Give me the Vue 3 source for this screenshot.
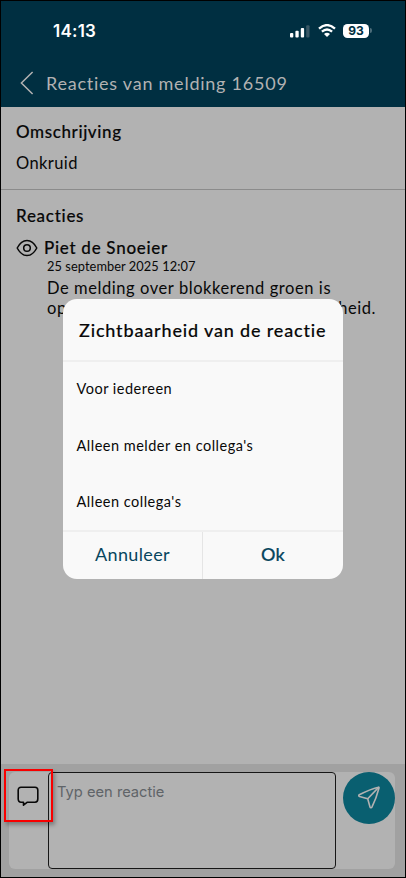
<script setup>
const options = ['Voor iedereen', "Alleen melder en collega's", "Alleen collega's"]
</script>

<template>
  <div class="phone">
    <header class="header">
      <div class="status">
        <span class="time">14:13</span>
        <div class="indicators">
          <svg class="signal" width="20" height="13" viewBox="0 0 20 13">
            <rect x="0" y="8" width="3.3" height="4.6" rx="1" fill="#fff" />
            <rect x="5.4" y="5.8" width="3.3" height="6.8" rx="1" fill="#fff" />
            <rect x="10.8" y="3" width="3.3" height="9.6" rx="1" fill="#fff" />
            <rect x="16.2" y="0.2" width="3.3" height="12.4" rx="1" fill="#395866" />
          </svg>
          <svg class="wifi" width="18" height="13" viewBox="0 0 18 13">
            <g fill="none" stroke="#fff" stroke-width="2.3">
              <path d="M1 4.6Q9 -2.4 17 4.6" />
              <path d="M3.9 7.7Q9 3.3 14.1 7.7" />
            </g>
            <path d="M6 10Q9 7.7 12 10L9 13Z" fill="#fff" />
          </svg>
          <div class="battery">93</div>
          <i class="nub"></i>
        </div>
      </div>
      <div class="titlebar">
        <svg class="back" width="14" height="24" viewBox="0 0 14 24">
          <path d="M12.6 1L1.4 12L12.6 23" fill="none" stroke="#b2b2b2" stroke-width="1.5" />
        </svg>
        <h1 class="title">Reacties van melding 16509</h1>
      </div>
    </header>

    <section class="description">
      <h2 class="heading omschrijving">Omschrijving</h2>
      <p class="body onkruid">Onkruid</p>
    </section>

    <section class="reactions">
      <h2 class="heading reacties">Reacties</h2>
      <div class="author">
        <svg width="22" height="18" viewBox="0 0 22 18" fill="none" stroke="#080808" stroke-width="1.5">
          <path d="M1.2 9C3.2 5.2 6.4 1.5 11 1.5S18.8 5.2 20.8 9C18.8 12.8 15.6 16.5 11 16.5S3.2 12.8 1.2 9Z" stroke-linejoin="round" />
          <circle cx="11" cy="9" r="3.3" />
        </svg>
        <h3 class="heading name">Piet de Snoeier</h3>
      </div>
      <p class="date">25 september 2025 12:07</p>
      <div class="message">
        <span class="line-one">De melding over blokkerend groen is</span>
        <div class="line-two"><span>opgelost</span><span>heid.</span></div>
      </div>
    </section>

    <footer class="footer">
      <div class="composer">
        <button class="visibility" aria-label="Zichtbaarheid">
          <svg width="22" height="21" viewBox="0 0 22 21">
            <path d="M4 1.2H18C19.7 1.2 20.8 2.3 20.8 4V13C20.8 15 19.7 16.2 18 16.2H10.4L6.5 19.2V16.2H4C2.3 16.2 1.2 15 1.2 13V4C1.2 2.3 2.3 1.2 4 1.2Z" fill="none" stroke="#080808" stroke-width="1.6" stroke-linejoin="round" />
          </svg>
        </button>
        <div class="input"><span>Typ een reactie</span></div>
        <button class="send" aria-label="Verstuur">
          <svg width="22" height="23" viewBox="0 0 22 23" fill="none" stroke="#b2b2b2" stroke-width="1.6" stroke-linejoin="round">
            <path d="M20.3 1.2C14 2.7 7.4 5.6 1.3 8.8C.5 9.3.6 10.2 1.5 10.5L9.7 12.8L12 21C12.3 22 13.4 22.1 13.9 21.2C17 15 19.4 8.2 21 2C21.1 1.4 20.9 1 20.3 1.2Z" />
            <path d="M9.7 12.8L20.6 1.4" />
          </svg>
        </button>
      </div>
    </footer>

    <div class="dialog" role="dialog">
      <h2 class="dialog-title"><span>Zichtbaarheid van de reactie</span></h2>
      <ul class="options">
        <li v-for="option in options" :key="option">{{ option }}</li>
      </ul>
      <div class="actions">
        <button class="cancel"><span>Annuleer</span></button>
        <button class="ok"><span>Ok</span></button>
      </div>
    </div>
  </div>
</template>

<style>
body { margin: 0; overflow: hidden; }
</style>

<style scoped>
* { box-sizing: border-box; }
h1, h2, h3, p, ul { margin: 0; padding: 0; font-weight: 400; }
ul { list-style: none; }
button { border: 0; padding: 0; background: none; font: inherit; }
svg { display: block; flex: none; }
.phone {
  position: relative;
  display: flex;
  flex-direction: column;
  width: 406px;
  height: 878px;
  border: 1px solid #000;
  background: #b2b2b2;
  color: #080808;
  font-family: Lato, sans-serif;
  white-space: nowrap;
  overflow: hidden;
}
.header { height: 106px; background: #002f41; flex: none; }
.status { display: flex; justify-content: space-between; height: 60px; padding: 0 33.5px 0 52px; }
.time {
  font: 600 17px/20px Inter, sans-serif;
  letter-spacing: .25px;
  color: #fff;
  padding-top: 20px;
}
.indicators { display: flex; height: 14px; margin-top: 23px; }
.signal { margin-top: 1px; }
.wifi { margin: 0 7px 0 8px; }
.battery {
  width: 26px;
  height: 14px;
  border-radius: 4.5px;
  background: #fff;
  color: #002f41;
  font: 700 12px/14px Inter, sans-serif;
  text-align: center;
}
.nub { width: 1.5px; height: 5px; margin: 4px 0 0 1px; border-radius: 0 2px 2px 0; background: #4c6d7a; }
.titlebar { display: flex; align-items: center; height: 24px; margin-top: 10px; padding-left: 18.5px; }
.title { margin-left: 12.5px; font-size: 18px; line-height: 24px; color: #b2b2b2; letter-spacing: .76px; }
.description { height: 83px; padding: 13px 15px 0; border-bottom: 1px solid #8b8b8b; flex: none; }
.heading { font-size: 17px; line-height: 24px; font-weight: 500; letter-spacing: .72px; -webkit-text-stroke: .15px #080808; }
.omschrijving { letter-spacing: .6px; }
.body { margin-top: 7px; font-size: 16.5px; line-height: 24px; letter-spacing: .4px; }
.reactions { padding: 14px 15px 0; flex: 1; }
.author { display: flex; align-items: center; height: 24px; margin-top: 8px; }
.name { margin-left: 6px; }
.date { margin: -2px 0 0 31px; font-size: 12.8px; line-height: 16px; letter-spacing: .07px; }
.message { margin: 4px 0 0 31px; font-size: 16.5px; line-height: 20px; letter-spacing: .57px; }
.line-one { display: block; }
.line-two { display: flex; justify-content: space-between; width: 329px; }
.footer { height: 113px; padding: 8px 10px 8px 8px; background: #a1a1a1; flex: none; }
.composer { display: flex; height: 97px; border-radius: 6px; background: #b2b2b2; }
.visibility {
  position: relative;
  z-index: 1;
  display: flex;
  align-items: flex-start;
  width: 49px;
  height: 53px;
  margin: -3px -10px 0 -5px;
  padding: 15px 0 0 11px;
  border: 2px solid #f80000;
  box-shadow: 2px 3px 4px rgba(0, 0, 0, .3);
  flex: none;
}
.input {
  width: 288px;
  height: 97px;
  margin-left: 5px;
  padding: 8px;
  border: 1px solid #161616;
  border-radius: 4px;
  color: #606468;
  font: 14.7px/22px Inter, sans-serif;
  flex: none;
}
.send {
  display: flex;
  justify-content: center;
  width: 52px;
  height: 52px;
  margin-left: auto;
  padding-top: 14px;
  border-radius: 50%;
  background: #095f70;
  flex: none;
}
.dialog {
  position: absolute;
  left: 62px;
  top: 298px;
  width: 280px;
  height: 280px;
  border-radius: 14px;
  background: #f9f9f9;
  overflow: hidden;
}
.dialog-title {
  height: 63px;
  padding: 19px 0 0 16px;
  border-bottom: 2px solid #efefef;
  font-size: 18px;
  line-height: 24px;
  font-weight: 500;
  letter-spacing: .84px;
  -webkit-text-stroke: .15px #080808;
}
.options { height: 168px; padding: 0 13.5px; font-size: 14.5px; letter-spacing: .5px; }
.options li { height: 56.5px; line-height: 54px; }
.actions { display: flex; height: 49px; border-top: 2px solid #efefef; color: #07465e; font-size: 18px; line-height: 45px; letter-spacing: .35px; }
.actions button { display: flex; justify-content: center; color: #07465e; letter-spacing: inherit; }
.cancel { width: 140px; border-right: 1px solid #e5e5e5; }
.ok { width: 140px; font-weight: 500; -webkit-text-stroke: .2px #07465e; }
</style>
